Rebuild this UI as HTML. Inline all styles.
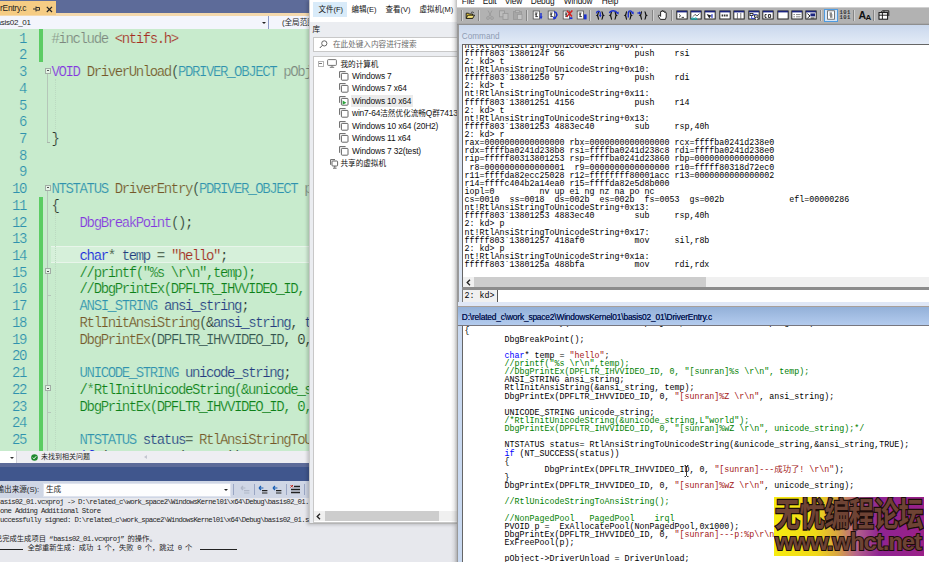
<!DOCTYPE html><html lang="zh"><head><meta charset="utf-8"><title>screen</title><style>
*{margin:0;padding:0;box-sizing:border-box}
html,body{width:929px;height:562px;overflow:hidden;background:#fff}
body{position:relative;font-family:"Liberation Sans","Noto Sans CJK SC",sans-serif}
.abs{position:absolute}
#vs{position:absolute;left:0;top:0;width:458px;height:562px;background:#e6e7ec;overflow:hidden}
#tabbar{position:absolute;left:0;top:0;width:458px;height:13.2px;background:#5d6b99}
#tab{position:absolute;left:0;top:1px;width:56px;height:14px;background:#f5cc84;font-size:8.4px;letter-spacing:-0.25px;line-height:12px;color:#1e1e1e;white-space:nowrap}
#tabline{position:absolute;left:0;top:13.2px;width:458px;height:2.4px;background:#f4d9ad}
#nav{position:absolute;left:0;top:15.5px;width:458px;height:13px;background:#f3f5fc;font-size:8px;letter-spacing:-0.25px;line-height:13px;color:#1e1e1e;white-space:nowrap}
#code{position:absolute;left:0;top:28.5px;width:458px;height:423px;background:#c8ebcd;overflow:hidden}
.ln{position:absolute;left:0;width:26px;text-align:right;color:#2f91ae;margin-top:2.1px;-webkit-text-stroke:0.2px #c8ebcd;font:14px/16.72px "Liberation Mono",monospace;letter-spacing:-1.38px;height:16.72px}
.cl{position:absolute;left:51.5px;white-space:pre;color:#2c342d;margin-top:2.1px;-webkit-text-stroke:0.2px #c8ebcd;font:14px/16.72px "Liberation Mono",monospace;letter-spacing:-1.38px;height:16.72px}
.g{color:#7d877f}.r{color:#a52a22}.p{color:#8434e0}.f{color:#75572a}.t{color:#2f91ae}.b{color:#1522e0}.v{color:#243a80}.c{color:#0d8018}.e{color:#33524e}
.cl u{text-decoration:none;-webkit-text-stroke:0.35px currentColor}
.gb{position:absolute;left:39px;width:3.5px;background:#5bcc63}
.fold{position:absolute;left:44.5px;width:6px;height:6px;border:1px solid #a3aea6;background:#e4f3e6}
.fold:after{content:"";position:absolute;left:1px;top:1.5px;width:2px;height:1px;background:#555}
.fl{position:absolute;left:47px;width:1px;background:#b5c6b9}
#status{position:absolute;left:0;top:451px;width:458px;height:12px;background:#eeeef2;font-size:7px;line-height:12px;white-space:nowrap;color:#1e1e1e}
#band1{position:absolute;left:0;top:463px;width:458px;height:4px;background:#5d6b99}
#band2{position:absolute;left:0;top:467px;width:458px;height:14px;background:#40568d}
#otool{position:absolute;left:0;top:481px;width:458px;height:17px;background:#cfd6e5;font-size:7.6px;line-height:17px;white-space:nowrap;color:#1e1e1e}
#otext{position:absolute;left:0;top:498px;width:458px;height:64px;background:#e7e8ed}
.ol{position:absolute;left:0;white-space:pre;font:7.3px/9.3px "Liberation Mono","Noto Sans CJK SC",monospace;letter-spacing:-0.66px;color:#1e1e1e}.ol i{font-style:normal;letter-spacing:0}.ol b{font-weight:normal;display:inline-block;width:7.3px;letter-spacing:0}
#vm{position:absolute;left:309px;top:0;width:149px;height:524px;background:#ebedf1;border-left:1px solid #c9c9c9;border-bottom:1px solid #b5b5b5;box-shadow:-2px 1px 3px rgba(0,0,0,.18);overflow:hidden}
.ti{position:absolute;white-space:nowrap;font-size:8.4px;line-height:12px;color:#111;letter-spacing:-0.15px}
.vmi{position:absolute;width:8px;height:8px}
#wd{position:absolute;left:457.3px;top:0;width:472px;height:562px;background:#a8a8a8;overflow:hidden}#wdsh{position:absolute;left:451.3px;top:0;width:6px;height:562px;background:linear-gradient(90deg,rgba(110,110,110,0),rgba(110,110,110,.12) 50%,rgba(110,110,110,.45))}
.mono{font-family:"Liberation Mono","Noto Sans CJK SC",monospace;font-size:8.33px;line-height:8.12px;white-space:pre;color:#000}
.wl{position:absolute;left:6.5px}
.k{color:#0000ff}.s{color:#a31515}.m{color:#008000}
</style></head><body>
<div id="vs">
<div id="tabbar"></div><div id="tabline"></div>
<div id="tab"><span class="abs" style="left:0;top:1px">rEntry.c</span><svg class="abs" style="left:33px;top:5px" width="8" height="6" viewBox="0 0 8 6"><path d="M0 3H3M3 0.5V5.5M3 1.5H6.5V4.2H3" stroke="#333" stroke-width="1" fill="none"/></svg><svg class="abs" style="left:45.5px;top:4.5px" width="7" height="7" viewBox="0 0 7 7"><path d="M0.8 0.8L6 6M6 0.8L0.8 6" stroke="#222" stroke-width="1.2" fill="none"/></svg></div>
<div id="nav"><span class="abs" style="left:-3.5px;top:0">asis02_01</span><span class="abs" style="left:261.5px;top:6px;width:0;height:0;border:2.2px solid transparent;border-top:2.6px solid #222"></span><span class="abs" style="left:267.5px;top:0;width:1.5px;height:13px;background:#8c9bc8"></span><span class="abs" style="left:282px;top:0;font-size:7.6px;letter-spacing:0">(全局范围)</span></div>
<div id="code">
<div class="gb" style="top:0;height:33.54px"></div>
<div class="gb" style="top:168.30px;height:300px"></div>
<div class="abs" style="left:51px;top:217.46px;width:420px;height:16.7px;background:#d6f0da;border-top:1px solid #e8f5ea;border-bottom:1px solid #e8f5ea"></div>
<div class="fl" style="top:45.54px;height:67.88px"></div>
<div class="abs" style="left:47px;top:113.42px;width:3px;height:1px;background:#a9b5ab"></div>
<div class="fl" style="top:162.58px;height:300px"></div>
<div class="abs" style="left:47px;top:266.40px;width:3.5px;height:1px;background:#b5c6b9"></div>
<div class="abs" style="left:47px;top:383.44px;width:3.5px;height:1px;background:#b5c6b9"></div>
<div class="fold" style="top:39.04px"></div>
<div class="fold" style="top:156.08px"></div>
<div class="fold" style="top:239.68px"></div>
<div class="fold" style="top:356.72px"></div>
<div class="abs" style="left:54.5px;top:50.26px;height:50.16px;border-left:1px dotted #bcd9c1"></div>
<div class="abs" style="left:54.5px;top:184.02px;height:300px;border-left:1px dotted #bcd9c1"></div>
<div class="ln" style="top:0.10px">1</div>
<div class="cl" style="top:0.10px"><span class="g">#include </span><span class="r">&lt;ntifs.h&gt;</span></div>
<div class="ln" style="top:16.82px">2</div>
<div class="ln" style="top:33.54px">3</div>
<div class="cl" style="top:33.54px"><span class="p">VOID</span> <span class="f">DriverUnload</span>(<span class="t">PDRIVER<u>_</u>OBJECT</span> <span class="g">pObject)</span></div>
<div class="ln" style="top:50.26px">4</div>
<div class="ln" style="top:66.98px">5</div>
<div class="ln" style="top:83.70px">6</div>
<div class="ln" style="top:100.42px">7</div>
<div class="cl" style="top:100.42px">}</div>
<div class="ln" style="top:117.14px">8</div>
<div class="ln" style="top:133.86px">9</div>
<div class="ln" style="top:150.58px">10</div>
<div class="cl" style="top:150.58px"><span class="t">NTSTATUS</span> <span class="f">DriverEntry</span>(<span class="t">PDRIVER<u>_</u>OBJECT</span> <span class="g">pObject,</span></div>
<div class="ln" style="top:167.30px">11</div>
<div class="cl" style="top:167.30px">{</div>
<div class="ln" style="top:184.02px">12</div>
<div class="cl" style="top:184.02px">    <span class="p">DbgBreakPoint</span>();</div>
<div class="ln" style="top:200.74px">13</div>
<div class="ln" style="top:217.46px">14</div>
<div class="cl" style="top:217.46px">    <span class="b">char</span>* <span class="v">temp</span> = <span class="r">"hello"</span>;</div>
<div class="ln" style="top:234.18px">15</div>
<div class="cl" style="top:234.18px">    <span class="c">//printf("%s \r\n",temp);</span></div>
<div class="ln" style="top:250.90px">16</div>
<div class="cl" style="top:250.90px">    <span class="c">//DbgPrintEx(DPFLTR<u>_</u>IHVVIDEO<u>_</u>ID, 0, "[sunran]%s</span></div>
<div class="ln" style="top:267.62px">17</div>
<div class="cl" style="top:267.62px">    <span class="t">ANSI<u>_</u>STRING</span> <span class="v">ansi<u>_</u>string</span>;</div>
<div class="ln" style="top:284.34px">18</div>
<div class="cl" style="top:284.34px">    <span class="f">RtlInitAnsiString</span>(&amp;<span class="v">ansi<u>_</u>string</span>, <span class="v">temp</span>);</div>
<div class="ln" style="top:301.06px">19</div>
<div class="cl" style="top:301.06px">    <span class="f">DbgPrintEx</span>(<span class="e">DPFLTR<u>_</u>IHVVIDEO<u>_</u>ID</span>, 0, <span class="r">"[sunran]%Z</span></div>
<div class="ln" style="top:317.78px">20</div>
<div class="ln" style="top:334.50px">21</div>
<div class="cl" style="top:334.50px">    <span class="t">UNICODE<u>_</u>STRING</span> <span class="v">unicode<u>_</u>string</span>;</div>
<div class="ln" style="top:351.22px">22</div>
<div class="cl" style="top:351.22px">    <span class="c">/*RtlInitUnicodeString(&amp;unicode<u>_</u>string,L"world");</span></div>
<div class="ln" style="top:367.94px">23</div>
<div class="cl" style="top:367.94px">    <span class="c">DbgPrintEx(DPFLTR<u>_</u>IHVVIDEO<u>_</u>ID, 0, "[sunran]%wZ</span></div>
<div class="ln" style="top:384.66px">24</div>
<div class="ln" style="top:401.38px">25</div>
<div class="cl" style="top:401.38px">    <span class="t">NTSTATUS</span> <span class="v">status</span>= <span class="f">RtlAnsiStringToUnicodeString</span>(</div>
<div class="ln" style="top:418.10px">26</div>
<div class="cl" style="top:418.10px">    <span class="b">if</span> (<span class="p">NT<u>_</u>SUCCESS</span>(<span class="v">status</span>))</div>
</div>
<div id="status"><span class="abs" style="left:0;top:0;width:16.5px;height:12px;background:#fff;border-right:1px solid #d0d0d8"></span><span class="abs" style="left:10px;top:5.5px;width:0;height:0;border:2px solid transparent;border-top:2.4px solid #333"></span><svg class="abs" style="left:31px;top:2.5px" width="7" height="7" viewBox="0 0 7 7"><circle cx="3.5" cy="3.5" r="3.3" fill="#1f8a2e"/><path d="M1.8 3.6L3 4.8L5.2 2.3" stroke="#fff" stroke-width="1" fill="none"/></svg><span class="abs" style="left:41px;top:0">未找到相关问题</span><span class="abs" style="left:142px;top:3.5px;width:0;height:0;border:2.5px solid transparent;border-right:3px solid #c4c6d0"></span></div>
<div id="band1"></div><div id="band2"></div>
<div id="otool"><span class="abs" style="left:-3.5px;top:0">输出来源(S):</span><span class="abs" style="left:43px;top:1.5px;width:188px;height:14px;background:#fdfdfe;border:1px solid #dfe3ee"></span><span class="abs" style="left:46px;top:0">生成</span><span class="abs" style="left:224px;top:8px;width:0;height:0;border:2.2px solid transparent;border-top:2.6px solid #222"></span><span class="abs" style="left:233px;top:3px;width:1px;height:11px;background:#9aa6c4"></span><svg class="abs" style="left:240px;top:4px" width="10" height="10" viewBox="0 0 10 10"><path d="M4 5.6H9.4M4 8H9.4" stroke="#b0b7c8" stroke-width="1.2"/><path d="M1 3H5.4M1 3L3 1M1 3L3 5" stroke="#b0b7c8" stroke-width="1.2" fill="none"/></svg><span class="abs" style="left:253.5px;top:3px;width:1px;height:11px;background:#9aa6c4"></span><svg class="abs" style="left:258px;top:4px" width="10" height="10" viewBox="0 0 10 10"><path d="M4 5.6H9.4M4 8H9.4" stroke="#222" stroke-width="1.2"/><path d="M1 3H5.4M1 3L3 1M1 3L3 5" stroke="#1a5fb4" stroke-width="1.2" fill="none"/></svg><svg class="abs" style="left:272px;top:4px" width="10" height="10" viewBox="0 0 10 10"><path d="M4 5.6H9.4M4 8H9.4" stroke="#222" stroke-width="1.2"/><path d="M1 3H5.4M1 3L3 1M1 3L3 5" stroke="#1a5fb4" stroke-width="1.2" fill="none"/></svg><span class="abs" style="left:286px;top:3px;width:1px;height:11px;background:#9aa6c4"></span><svg class="abs" style="left:290px;top:3px" width="11" height="11" viewBox="0 0 11 11"><path d="M4 2.5H10M1 5.5H10M1 8.5H10" stroke="#222" stroke-width="1.3"/><path d="M0.5 1L3 3.5M3 1L0.5 3.5" stroke="#c4281c" stroke-width="1"/></svg><span class="abs" style="left:304px;top:3px;width:1px;height:11px;background:#9aa6c4"></span></div>
<div id="otext">
<div class="ol" style="top:-0.35px">asis02_01.vcxproj -&gt; D:\related_c\work_space2\WindowsKernel01\x64\Debug\basis02_01.sys</div>
<div class="ol" style="top:9.05px">one Adding Additional Store</div>
<div class="ol" style="top:18.35px">uccessfully signed: D:\related_c\work_space2\WindowsKernel01\x64\Debug\basis02_01.sys</div>
<div class="ol" style="top:36.65px;left:-5.1px"><i>已完成生成项目</i><b style="text-align:right">“</b>basis02_01.vcxproj<b>”</b><i>的操作。</i></div>
<div class="ol" style="top:46.05px;left:27.4px"><i>全部重新生成</i>: <i>成功</i> 1 <i>个，失败</i> 0 <i>个，跳过</i> 0 <i>个</i></div>
<div class="abs" style="left:0;top:51.20px;width:23px;height:1px;background:#222"></div>
<div class="abs" style="left:200px;top:51.20px;width:37px;height:1px;background:#222"></div>
</div>
</div>
<div id="vm">
<div class="abs" style="left:0;top:0;width:149px;height:21.5px;background:#fff"></div>
<div class="abs" style="left:2.5px;top:2px;width:34px;height:15px;background:#d9ebf9"></div>
<div class="ti" style="left:8.5px;top:4px;font-size:7.5px;letter-spacing:0">文件(F)</div>
<div class="ti" style="left:41.5px;top:4px;font-size:7.5px;letter-spacing:0">编辑(E)</div>
<div class="ti" style="left:75.5px;top:4px;font-size:7.5px;letter-spacing:0">查看(V)</div>
<div class="ti" style="left:109.5px;top:4px;font-size:7.5px;letter-spacing:0">虚拟机(M)</div>
<div class="ti" style="left:2.5px;top:24px;font-size:7.6px">库</div>
<div class="abs" style="left:3px;top:37px;width:150px;height:14.5px;background:#fff;border:1px solid #c8c8c8"></div>
<svg class="abs" style="left:9px;top:40px" width="9" height="9" viewBox="0 0 9 9"><circle cx="5.3" cy="3.4" r="2.6" fill="none" stroke="#555" stroke-width="0.9"/><path d="M3.4 5.3L0.8 8" stroke="#555" stroke-width="1"/></svg>
<div class="ti" style="left:23px;top:38.5px;font-size:7.6px;letter-spacing:0;color:#6a6a6a">在此处键入内容进行搜索</div>
<div class="abs" style="left:3px;top:56px;width:150px;height:467px;background:#fff;border:1px solid #c8c8c8"></div>
<div class="abs" style="left:7.5px;top:60.5px;width:6px;height:6px;border:1px solid #b4b4b4;background:#fff"></div><div class="abs" style="left:9px;top:63px;width:3px;height:1px;background:#777"></div>
<svg class="abs" style="left:16.5px;top:59px" width="10" height="9" viewBox="0 0 10 9"><rect x="0.6" y="0.6" width="8.8" height="5.8" rx="0.8" fill="#fff" stroke="#666" stroke-width="0.9"/><path d="M5 6.5V8M2.8 8.3H7.2" stroke="#666" stroke-width="0.9"/></svg>
<div class="ti" style="left:30.5px;top:58.6px;font-size:7.6px;letter-spacing:0">我的计算机</div>
<svg class="abs" style="left:28.5px;top:70.90px" width="10" height="10" viewBox="0 0 10 10"><path d="M0.6 6.8V0.6H6.6" fill="none" stroke="#555" stroke-width="0.9"/><rect x="2.4" y="2.4" width="6.6" height="6.8" rx="0.8" fill="#fff" stroke="#555" stroke-width="0.9"/></svg>
<div class="ti" style="left:42px;top:69.70px">Windows 7</div>
<svg class="abs" style="left:28.5px;top:83.38px" width="10" height="10" viewBox="0 0 10 10"><path d="M0.6 6.8V0.6H6.6" fill="none" stroke="#555" stroke-width="0.9"/><rect x="2.4" y="2.4" width="6.6" height="6.8" rx="0.8" fill="#fff" stroke="#555" stroke-width="0.9"/></svg>
<div class="ti" style="left:42px;top:82.18px">Windows 7 x64</div>
<div class="abs" style="left:41px;top:94.86px;width:62px;height:12px;background:#ebebeb"></div>
<svg class="abs" style="left:28.5px;top:95.86px" width="10" height="10" viewBox="0 0 10 10"><path d="M0.6 6.8V0.6H6.6" fill="none" stroke="#555" stroke-width="0.9"/><rect x="2.4" y="2.4" width="6.6" height="6.8" rx="0.8" fill="#fff" stroke="#555" stroke-width="0.9"/><path d="M3.6 4.6V8.8L7.4 6.7Z" fill="#2aa13a"/></svg>
<div class="ti" style="left:42px;top:94.66px">Windows 10 x64</div>
<svg class="abs" style="left:28.5px;top:108.34px" width="10" height="10" viewBox="0 0 10 10"><path d="M0.6 6.8V0.6H6.6" fill="none" stroke="#555" stroke-width="0.9"/><rect x="2.4" y="2.4" width="6.6" height="6.8" rx="0.8" fill="#fff" stroke="#555" stroke-width="0.9"/></svg>
<div class="ti" style="left:42px;top:107.14px">win7-64<span style="font-size:7.6px;letter-spacing:0">洁然优化流畅</span>Q<span style="font-size:7.6px;letter-spacing:0">群</span>741361</div>
<svg class="abs" style="left:28.5px;top:120.82px" width="10" height="10" viewBox="0 0 10 10"><path d="M0.6 6.8V0.6H6.6" fill="none" stroke="#555" stroke-width="0.9"/><rect x="2.4" y="2.4" width="6.6" height="6.8" rx="0.8" fill="#fff" stroke="#555" stroke-width="0.9"/></svg>
<div class="ti" style="left:42px;top:119.62px">Windows 10 x64 (20H2)</div>
<svg class="abs" style="left:28.5px;top:133.30px" width="10" height="10" viewBox="0 0 10 10"><path d="M0.6 6.8V0.6H6.6" fill="none" stroke="#555" stroke-width="0.9"/><rect x="2.4" y="2.4" width="6.6" height="6.8" rx="0.8" fill="#fff" stroke="#555" stroke-width="0.9"/></svg>
<div class="ti" style="left:42px;top:132.10px">Windows 11 x64</div>
<svg class="abs" style="left:28.5px;top:145.78px" width="10" height="10" viewBox="0 0 10 10"><path d="M0.6 6.8V0.6H6.6" fill="none" stroke="#555" stroke-width="0.9"/><rect x="2.4" y="2.4" width="6.6" height="6.8" rx="0.8" fill="#fff" stroke="#555" stroke-width="0.9"/></svg>
<div class="ti" style="left:42px;top:144.58px">Windows 7 32(test)</div>
<svg class="abs" style="left:19.5px;top:158.5px" width="9" height="10" viewBox="0 0 9 10"><path d="M0.6 5.8V0.6H5" fill="none" stroke="#555" stroke-width="0.9"/><rect x="2" y="2" width="5.6" height="5" rx="0.8" fill="#fff" stroke="#555" stroke-width="0.9"/><path d="M4.8 7V8.8M3 9.2H6.6" stroke="#555" stroke-width="0.9"/></svg>
<div class="ti" style="left:30.5px;top:158.2px;font-size:7.6px;letter-spacing:0">共享的虚拟机</div>
<div class="abs" style="left:4px;top:511px;width:146px;height:9.5px;background:#f0f0f0"></div>
<div class="abs" style="left:14.5px;top:511px;width:114px;height:9.5px;background:#cdcdcd"></div>
<svg class="abs" style="left:6px;top:512.5px" width="5" height="7" viewBox="0 0 5 7"><path d="M4 0.8L1.2 3.5L4 6.2" stroke="#222" stroke-width="1.3" fill="none"/></svg>
</div>
<div id="wdsh"></div>
<div id="wd">
<div class="abs" style="left:0;top:0;width:472px;height:7.4px;background:#fff"></div>
<div class="abs" style="left:4.5px;top:-5.2px;font-size:8.3px;line-height:12px;letter-spacing:-0.15px;color:#111;white-space:nowrap">File</div>
<div class="abs" style="left:25.5px;top:-5.2px;font-size:8.3px;line-height:12px;letter-spacing:-0.15px;color:#111;white-space:nowrap">Edit</div>
<div class="abs" style="left:47.5px;top:-5.2px;font-size:8.3px;line-height:12px;letter-spacing:-0.15px;color:#111;white-space:nowrap">View</div>
<div class="abs" style="left:73.5px;top:-5.2px;font-size:8.3px;line-height:12px;letter-spacing:-0.15px;color:#111;white-space:nowrap">Debug</div>
<div class="abs" style="left:106.5px;top:-5.2px;font-size:8.3px;line-height:12px;letter-spacing:-0.15px;color:#111;white-space:nowrap">Window</div>
<div class="abs" style="left:144.5px;top:-5.2px;font-size:8.3px;line-height:12px;letter-spacing:-0.15px;color:#111;white-space:nowrap">Help</div>
<div class="abs" style="left:0;top:7.4px;width:472px;height:16.1px;background:#b2b2b2;border-top:1px solid #d0d0d0"></div>
<div class="abs" style="left:3.7px;top:10px;width:1px;height:11px;background:#858585"></div><div class="abs" style="left:4.7px;top:10px;width:1px;height:11px;background:#d2d2d2"></div>
<div class="abs" style="left:21.2px;top:10px;width:1px;height:11px;background:#858585"></div><div class="abs" style="left:22.2px;top:10px;width:1px;height:11px;background:#d2d2d2"></div>
<div class="abs" style="left:69.2px;top:10px;width:1px;height:11px;background:#858585"></div><div class="abs" style="left:70.2px;top:10px;width:1px;height:11px;background:#d2d2d2"></div>
<div class="abs" style="left:131.7px;top:10px;width:1px;height:11px;background:#858585"></div><div class="abs" style="left:132.7px;top:10px;width:1px;height:11px;background:#d2d2d2"></div>
<div class="abs" style="left:195.2px;top:10px;width:1px;height:11px;background:#858585"></div><div class="abs" style="left:196.2px;top:10px;width:1px;height:11px;background:#d2d2d2"></div>
<div class="abs" style="left:214.2px;top:10px;width:1px;height:11px;background:#858585"></div><div class="abs" style="left:215.2px;top:10px;width:1px;height:11px;background:#d2d2d2"></div>
<div class="abs" style="left:362.8px;top:10px;width:1px;height:11px;background:#858585"></div><div class="abs" style="left:363.8px;top:10px;width:1px;height:11px;background:#d2d2d2"></div>
<div class="abs" style="left:396.0px;top:10px;width:1px;height:11px;background:#858585"></div><div class="abs" style="left:397.0px;top:10px;width:1px;height:11px;background:#d2d2d2"></div>
<div class="abs" style="left:415.8px;top:10px;width:1px;height:11px;background:#858585"></div><div class="abs" style="left:416.8px;top:10px;width:1px;height:11px;background:#d2d2d2"></div>
<svg class="abs" style="left:6.7px;top:10.2px" width="12" height="10" viewBox="0 0 12 10"><g transform="translate(1.4,1.2) scale(0.8)"><path d="M1 9V2.5H4L5 3.5H9V9Z" fill="#e8c83a" stroke="#111" stroke-width="1.1"/><path d="M1 9L3 5H11.5L9 9Z" fill="#f5e27a" stroke="#111" stroke-width="1.1"/><path d="M7 1.8C8.5 0.6 10 0.8 10.6 2.4" stroke="#111" stroke-width="0.8" fill="none"/></g></svg>
<svg class="abs" style="left:26.7px;top:10.2px" width="12" height="10" viewBox="0 0 12 10"><path d="M4 0.5L7.2 6.5M8 0.5L4.8 6.5" stroke="#9a9a9a" stroke-width="0.9" fill="none"/><circle cx="4" cy="8" r="1.4" fill="none" stroke="#9a9a9a" stroke-width="0.9"/><circle cx="8" cy="8" r="1.4" fill="none" stroke="#9a9a9a" stroke-width="0.9"/></svg>
<svg class="abs" style="left:40.7px;top:10.2px" width="12" height="10" viewBox="0 0 12 10"><rect x="1.5" y="0.8" width="5" height="6" fill="#bdbdbd" stroke="#999" stroke-width="0.9"/><rect x="5" y="3.4" width="5" height="6" fill="#bdbdbd" stroke="#999" stroke-width="0.9"/></svg>
<svg class="abs" style="left:54.7px;top:10.2px" width="12" height="10" viewBox="0 0 12 10"><rect x="1.5" y="1.6" width="8" height="7.8" fill="#a6a6a6" stroke="#999" stroke-width="0.9"/><rect x="3.6" y="0.6" width="3.8" height="2" fill="#b8b8b8" stroke="#999" stroke-width="0.7"/><rect x="5.4" y="4.4" width="4.6" height="5" fill="#c4c4c4" stroke="#999" stroke-width="0.8"/></svg>
<svg class="abs" style="left:73.7px;top:10.2px" width="12" height="10" viewBox="0 0 12 10"><rect x="2.2" y="1" width="6.4" height="8" fill="#fff" stroke="#555" stroke-width="0.8"/><path d="M3.8 3H6.6M3.8 4.8H6M4.4 6.6H7M5.2 3V7" stroke="#222" stroke-width="0.8"/><path d="M10 3V8" stroke="#1a2fd0" stroke-width="1.4"/><path d="M8.4 6.6L10 9.6L11.6 6.6Z" fill="#1a2fd0"/></svg>
<svg class="abs" style="left:88.7px;top:10.2px" width="12" height="10" viewBox="0 0 12 10"><rect x="2.2" y="1" width="6.4" height="8" fill="#fff" stroke="#555" stroke-width="0.8"/><path d="M3.8 3H6.6M3.8 4.8H6M4.4 6.6H7M5.2 3V7" stroke="#222" stroke-width="0.8"/><path d="M8 2C11.4 1.4 11.8 7 8.4 8" stroke="#1a2fd0" stroke-width="1.3" fill="none"/><path d="M7 6.2L7.4 9.6L10.4 8.4Z" fill="#1a2fd0"/><path d="M9.6 3.4L11.4 5L9.6 6.4" stroke="#1a2fd0" stroke-width="0.9" fill="none"/></svg>
<svg class="abs" style="left:103.7px;top:10.2px" width="12" height="10" viewBox="0 0 12 10"><rect x="2.2" y="1" width="6.4" height="8" fill="#fff" stroke="#555" stroke-width="0.8"/><path d="M3.8 3H6.6M3.8 4.8H6M4.4 6.6H7M5.2 3V7" stroke="#222" stroke-width="0.8"/><path d="M6 0.8L11 6.4M11.4 0.4L5.6 6.8" stroke="#d42020" stroke-width="1.5"/><path d="M8.6 8.2H11.4" stroke="#1a2fd0" stroke-width="1.8"/></svg>
<svg class="abs" style="left:117.7px;top:10.2px" width="12" height="10" viewBox="0 0 12 10"><rect x="2.2" y="1" width="6.4" height="8" fill="#fff" stroke="#555" stroke-width="0.8"/><path d="M3.8 3H6.6M3.8 4.8H6M4.4 6.6H7M5.2 3V7" stroke="#222" stroke-width="0.8"/><rect x="9" y="4.4" width="2.6" height="5" fill="#1a2fd0"/></svg>
<svg class="abs" style="left:136.7px;top:10.2px" width="12" height="10" viewBox="0 0 12 10"><path d="M5 1.6C3.6 1.8 4.6 4.8 3.2 5.4C4.6 6 3.6 9.2 5 9.4M7.6 1.6C9 1.8 8 4.8 9.4 5.4C8 6 9 9.2 7.6 9.4" stroke="#111" stroke-width="1.2" fill="none"/><path d="M2.4 3.4C2.6 0.6 6.2 0.2 6.3 3.4V6" stroke="#1a2fd0" stroke-width="1.2" fill="none"/><path d="M5 5L6.3 7.4L7.6 5Z" fill="#1a2fd0"/></svg>
<svg class="abs" style="left:150.2px;top:10.2px" width="12" height="10" viewBox="0 0 12 10"><path d="M5 1.6C3.6 1.8 4.6 4.8 3.2 5.4C4.6 6 3.6 9.2 5 9.4M7.6 1.6C9 1.8 8 4.8 9.4 5.4C8 6 9 9.2 7.6 9.4" stroke="#111" stroke-width="1.2" fill="none"/><path d="M2.4 3C3.6 0 9 0 10.4 3" stroke="#1a2fd0" stroke-width="1.3" fill="none"/><path d="M8.8 3L11.6 4.4L11.6 1.6Z" fill="#1a2fd0"/></svg>
<svg class="abs" style="left:164.7px;top:10.2px" width="12" height="10" viewBox="0 0 12 10"><path d="M5 1.6C3.6 1.8 4.6 4.8 3.2 5.4C4.6 6 3.6 9.2 5 9.4M7.6 1.6C9 1.8 8 4.8 9.4 5.4C8 6 9 9.2 7.6 9.4" stroke="#111" stroke-width="1.2" fill="none"/><path d="M6.3 7.6V2.4C6.6 0.2 10 0.2 10.4 3" stroke="#1a2fd0" stroke-width="1.3" fill="none"/><path d="M8.8 3L11.6 4.4L11.6 1.6Z" fill="#1a2fd0"/></svg>
<svg class="abs" style="left:179.7px;top:10.2px" width="12" height="10" viewBox="0 0 12 10"><path d="M5 1.6C3.6 1.8 4.6 4.8 3.2 5.4C4.6 6 3.6 9.2 5 9.4M7.6 1.6C9 1.8 8 4.8 9.4 5.4C8 6 9 9.2 7.6 9.4" stroke="#111" stroke-width="1.2" fill="none"/><path d="M0.4 3H3" stroke="#1a2fd0" stroke-width="1.4"/><path d="M2 1.2L4.2 3L2 4.8Z" fill="#1a2fd0"/></svg>
<svg class="abs" style="left:199.3px;top:10.2px" width="12" height="10" viewBox="0 0 12 10"><path d="M3.4 9.4L1.4 6.2C1 5.2 2.2 4.8 2.8 5.6L3.6 6.4V2C3.6 1 5 1 5 2V1.2C5 0.2 6.4 0.2 6.4 1.2V1.8C6.4 0.8 7.8 0.8 7.8 1.8V2.8C7.8 2 9.2 2 9.2 3V7L8.4 9.4Z" fill="#fff" stroke="#111" stroke-width="0.9"/></svg>
<svg class="abs" style="left:218.7px;top:10.2px" width="12" height="10" viewBox="0 0 12 10"><rect x="0.8" y="1" width="10.4" height="8" fill="#fff" stroke="#222" stroke-width="1"/><path d="M1 1.6H11" stroke="#1a237e" stroke-width="1.6"/><path d="M3 4.4L4.6 5.8L3 7.2M5.6 7.4H8" stroke="#111" stroke-width="0.8" fill="none"/></svg>
<svg class="abs" style="left:232.7px;top:10.2px" width="12" height="10" viewBox="0 0 12 10"><rect x="0.8" y="1" width="10.4" height="8" fill="#fff" stroke="#222" stroke-width="1"/><path d="M1 1.6H11" stroke="#1a237e" stroke-width="1.6"/><path d="M3 6.6L5 4.4L7 6L9.4 3.6" stroke="#333" stroke-width="0.8" fill="none"/><circle cx="2.6" cy="9" r="1.2" fill="none" stroke="#0aa" stroke-width="0.9"/><circle cx="5.6" cy="9" r="1.2" fill="none" stroke="#0aa" stroke-width="0.9"/></svg>
<svg class="abs" style="left:247.2px;top:10.2px" width="12" height="10" viewBox="0 0 12 10"><rect x="0.8" y="1" width="10.4" height="8" fill="#fff" stroke="#222" stroke-width="1"/><path d="M1 1.6H11" stroke="#1a237e" stroke-width="1.6"/><path d="M2.6 4L5.4 8.6L6.4 6.4L9 6Z" fill="#222"/><path d="M8 4V8" stroke="#1a2fd0" stroke-width="1"/></svg>
<svg class="abs" style="left:261.7px;top:10.2px" width="12" height="10" viewBox="0 0 12 10"><rect x="0.8" y="1" width="10.4" height="8" fill="#fff" stroke="#222" stroke-width="1"/><path d="M1 1.6H11" stroke="#1a237e" stroke-width="1.6"/><path d="M2.6 5.6H9.4" stroke="#333" stroke-width="2" stroke-dasharray="1.6 0.7"/></svg>
<svg class="abs" style="left:275.7px;top:10.2px" width="12" height="10" viewBox="0 0 12 10"><rect x="0.8" y="1" width="10.4" height="8" fill="#fff" stroke="#222" stroke-width="1"/><path d="M1 1.6H11" stroke="#1a237e" stroke-width="1.6"/><path d="M4.4 3V9M7.8 3V9" stroke="#555" stroke-width="0.8"/></svg>
<svg class="abs" style="left:290.3px;top:10.2px" width="12" height="10" viewBox="0 0 12 10"><rect x="0.8" y="1" width="10.4" height="8" fill="#fff" stroke="#222" stroke-width="1"/><path d="M1 1.6H11" stroke="#1a237e" stroke-width="1.6"/><rect x="2" y="3.4" width="3" height="2.2" fill="#fff" stroke="#111" stroke-width="0.8"/><rect x="6.6" y="5" width="3.4" height="2.2" fill="#fff" stroke="#111" stroke-width="0.8"/><path d="M3.6 5.6V8.4H7M5 4.4H8.4V5" stroke="#1a2fd0" stroke-width="0.8" fill="none"/><circle cx="8.6" cy="8.6" r="1.5" fill="#fff" stroke="#111" stroke-width="0.8"/></svg>
<svg class="abs" style="left:305.0px;top:10.2px" width="12" height="10" viewBox="0 0 12 10"><rect x="0.8" y="1" width="10.4" height="8" fill="#fff" stroke="#222" stroke-width="1"/><path d="M1 1.6H11" stroke="#1a237e" stroke-width="1.6"/><path d="M3 4.6V7.4M3 4.6H4.6M3 7.4H4.6M6.4 4.6H8.6V7.4H6.4Z" stroke="#111" stroke-width="0.9" fill="none"/></svg>
<svg class="abs" style="left:319.4px;top:10.2px" width="12" height="10" viewBox="0 0 12 10"><rect x="0.8" y="1" width="10.4" height="8" fill="#fff" stroke="#222" stroke-width="1"/><path d="M1 1.6H11" stroke="#1a237e" stroke-width="1.6"/></svg>
<svg class="abs" style="left:333.5px;top:10.2px" width="12" height="10" viewBox="0 0 12 10"><rect x="0.8" y="1" width="10.4" height="8" fill="#fff" stroke="#222" stroke-width="1"/><path d="M1 1.6H11" stroke="#1a237e" stroke-width="1.6"/><path d="M2.4 4.6H4M5 4.6H9.6M2.4 6.8H4M5 6.8H9.6" stroke="#666" stroke-width="0.8"/></svg>
<svg class="abs" style="left:348.1px;top:10.2px" width="12" height="10" viewBox="0 0 12 10"><rect x="0.8" y="1" width="10.4" height="8" fill="#fff" stroke="#222" stroke-width="1"/><path d="M1 1.6H11" stroke="#1a237e" stroke-width="1.6"/><path d="M2.4 3.6L5 6L2.4 8.2M5.6 8H9.6" stroke="#111" stroke-width="0.9" fill="none"/><rect x="5.4" y="3.4" width="4.6" height="3" fill="#1a237e"/></svg>
<div class="abs" style="left:366.7px;top:9.2px;width:14px;height:13px;background:#d6e6f7;border:1px solid #4f9be0"></div>
<svg class="abs" style="left:367.7px;top:10.2px" width="12" height="10" viewBox="0 0 12 10"><rect x="2.6" y="0.8" width="6.8" height="8.4" fill="#fff" stroke="#555" stroke-width="0.8"/><path d="M4.4 3H7M4.4 5H7.6M5 7H7.6M6 3V7.4" stroke="#333" stroke-width="0.7"/></svg>
<div class="abs" style="left:382.2px;top:9.6px;font:bold 5.6px/5.6px 'Liberation Mono',monospace;letter-spacing:0.4px;color:#333;white-space:pre">101<br>101</div>
<div class="abs" style="left:401.3px;top:8.6px;font:bold 10.5px/12px 'Liberation Sans',sans-serif;color:#111;white-space:pre">A<span style="font-size:8px;position:relative;top:1.6px;left:-0.6px">A</span></div>
<svg class="abs" style="left:420.3px;top:10.2px" width="12" height="10" viewBox="0 0 12 10"><rect x="1" y="2.6" width="8.6" height="6.6" fill="#fff" stroke="#111" stroke-width="1"/><path d="M1 5.2H9.6M4.4 2.6V9" stroke="#111" stroke-width="0.9"/><path d="M3 2.4L4.4 0.8H10.8V6" stroke="#111" stroke-width="0.9" fill="none"/><path d="M6 0.8V2.4" stroke="#111" stroke-width="0.8"/></svg>
<div class="abs" style="left:0;top:23.5px;width:472px;height:1.5px;background:#8e8e8e"></div>
<div class="abs" style="left:1px;top:25px;width:471px;height:281px;background:#dbe5f3"></div>
<div class="abs" style="left:1px;top:25px;width:471px;height:19px;background:linear-gradient(#c9d7ec,#e3ebf7)"></div>
<div class="abs" style="left:0;top:25px;width:1.5px;height:540px;background:#999"></div>
<div class="abs" style="left:4.5px;top:30.8px;font-size:8.2px;line-height:12px;color:#8f9cb3;white-space:nowrap">Command</div>
<div class="abs" style="left:4.5px;top:43.5px;width:468px;height:245px;background:#fff;border-left:1px solid #666;border-top:1px solid #666;overflow:hidden">
<div class="mono abs" style="left:1.7px;top:-2.78px">nt!RtlAnsiStringToUnicodeString+0xf:
fffff803`1380124f 56              push    rsi
2: kd&gt; t
nt!RtlAnsiStringToUnicodeString+0x10:
fffff803`13801250 57              push    rdi
2: kd&gt; t
nt!RtlAnsiStringToUnicodeString+0x11:
fffff803`13801251 4156            push    r14
2: kd&gt; t
nt!RtlAnsiStringToUnicodeString+0x13:
fffff803`13801253 4883ec40        sub     rsp,40h
2: kd&gt; r
rax=0000000000000000 rbx=0000000000000000 rcx=ffffba0241d238e0
rdx=ffffba0241d238b8 rsi=ffffba0241d238c8 rdi=ffffba0241d238e0
rip=fffff80313801253 rsp=ffffba0241d23860 rbp=0000000000000000
 r8=0000000000000001  r9=0000000000000000 r10=fffff80318d72ec0
r11=ffffda82ecc25028 r12=ffffffff80001acc r13=0000000000000002
r14=ffffc404b2a14ea0 r15=ffffda82e5d8b000
iopl=0         nv up ei ng nz na po nc
cs=0010  ss=0018  ds=002b  es=002b  fs=0053  gs=002b             efl=00000286
nt!RtlAnsiStringToUnicodeString+0x13:
fffff803`13801253 4883ec40        sub     rsp,40h
2: kd&gt; p
nt!RtlAnsiStringToUnicodeString+0x17:
fffff803`13801257 418af0          mov     sil,r8b
2: kd&gt; p
nt!RtlAnsiStringToUnicodeString+0x1a:
fffff803`1380125a 488bfa          mov     rdi,rdx</div>
<div class="abs" style="left:0;top:232.5px;width:468px;height:10px;background:#f0f0f0"></div>
<div class="abs" style="left:11px;top:232.5px;width:232px;height:10px;background:#cdcdcd"></div>
<svg class="abs" style="left:3.5px;top:234px" width="5" height="7" viewBox="0 0 5 7"><path d="M4 0.8L1.2 3.5L4 6.2" stroke="#222" stroke-width="1.3" fill="none"/></svg>
</div>
<div class="abs" style="left:4.5px;top:287px;width:468px;height:2.5px;background:#8c8c8c"></div>
<div class="abs" style="left:4.5px;top:289.5px;width:35px;height:12px;background:#f0f0f0;border-left:1px solid #777"></div>
<div class="mono abs" style="left:7.2px;top:291.5px;">2: kd&gt;</div>
<div class="abs" style="left:39.5px;top:289.5px;width:433px;height:12px;background:#fff;border-left:1.5px solid #555"></div>
<div class="abs" style="left:1px;top:301.5px;width:471px;height:4.5px;background:#dfe7f6"></div>
<div class="abs" style="left:1px;top:305.5px;width:471px;height:20px;background:linear-gradient(#93b0d8,#b3cbee);border-top:1px solid #a79f9a;border-bottom:1.5px solid #77777f"></div>
<div class="abs" style="left:4.5px;top:311px;font-size:8.4px;line-height:12px;letter-spacing:-0.18px;color:#0b1c55;white-space:nowrap;text-shadow:0 0 0.4px #0b1c55">D:\related_c\work_space2\WindowsKernel01\basis02_01\DriverEntry.c</div>
<div class="abs" style="left:1px;top:326px;width:3.5px;height:240px;background:#c9d9f0"></div>
<div class="abs" style="left:4.5px;top:326px;width:468px;height:240px;background:#fff;border-left:1px solid #666;overflow:hidden">
<div class="mono abs" style="left:1.7px;top:-6.71px;line-height:8.14px">NTSTATUS DriverEntry(PDRIVER_OBJECT pObject, PUNICODE_STRING pRegPath)
{
        DbgBreakPoint();

        <span class="k">char</span>* temp = <span class="s">"hello"</span>;
        <span class="m">//printf("%s \r\n",temp);</span>
        <span class="m">//DbgPrintEx(DPFLTR_IHVVIDEO_ID, 0, "[sunran]%s \r\n", temp);</span>
        ANSI_STRING ansi_string;
        RtlInitAnsiString(&amp;ansi_string, temp);
        DbgPrintEx(DPFLTR_IHVVIDEO_ID, 0, <span class="s">"[sunran]%Z \r\n"</span>, ansi_string);

        UNICODE_STRING unicode_string;
        <span class="m">/*RtlInitUnicodeString(&amp;unicode_string,L"world");</span>
        <span class="m">DbgPrintEx(DPFLTR_IHVVIDEO_ID, 0, "[sunran]%wZ \r\n", unicode_string);*/</span>

        NTSTATUS status= RtlAnsiStringToUnicodeString(&amp;unicode_string,&amp;ansi_string,TRUE);
        <span class="k">if</span> (NT_SUCCESS(status))
        {
                DbgPrintEx(DPFLTR_IHVVIDEO_ID, 0, <span class="s">"[sunran]---成功了! \r\n"</span>);
        }
        DbgPrintEx(DPFLTR_IHVVIDEO_ID, 0, <span class="s">"[sunran]%wZ \r\n"</span>, unicode_string);

        <span class="m">//RtlUnicodeStringToAnsiString();</span>

        <span class="m">//NonPagedPool   PagedPool    irql</span>
        PVOID p =  ExAllocatePool(NonPagedPool,0x1000);
        DbgPrintEx(DPFLTR_IHVVIDEO_ID, 0, <span class="s">"[sunran]---p:%p\r\n"</span>, p);
        ExFreePool(p);

        pObject-&gt;DriverUnload = DriverUnload;
        <span class="k">return</span> STATUS_SUCCESS;</div>
<svg class="abs" style="left:221px;top:138.5px" width="5" height="12" viewBox="0 0 5 12"><path d="M0.5 0.5H2M3 0.5H4.5M2.5 1V11M0.5 11.5H2M3 11.5H4.5" stroke="#222" stroke-width="0.9" fill="none"/></svg>
</div>
<div class="abs" style="left:316.7px;top:497px;width:150px;height:59px;background:linear-gradient(90deg,#f6ec10 0%,#f0d818 28%,#d9a640 42%,#b4628c 55%,#8e2492 70%,#9a2088 100%);overflow:hidden"><div class="abs" style="left:1px;top:-7px;font:bold 25px/32px 'Noto Sans CJK SC','Liberation Sans',sans-serif;letter-spacing:-0.3px;color:#6e4334;white-space:nowrap;transform:scaleY(1.32);transform-origin:0 0;-webkit-text-stroke:2px #1c0d0a;paint-order:stroke fill">无忧编程论坛</div><div class="abs" style="left:1px;top:30.5px;font:bold 24px/28px 'Liberation Sans',sans-serif;letter-spacing:-1.1px;color:#6e4334;white-space:nowrap;-webkit-text-stroke:2px #1c0d0a;paint-order:stroke fill">www.whct.net</div></div>
</div>
</body></html>
